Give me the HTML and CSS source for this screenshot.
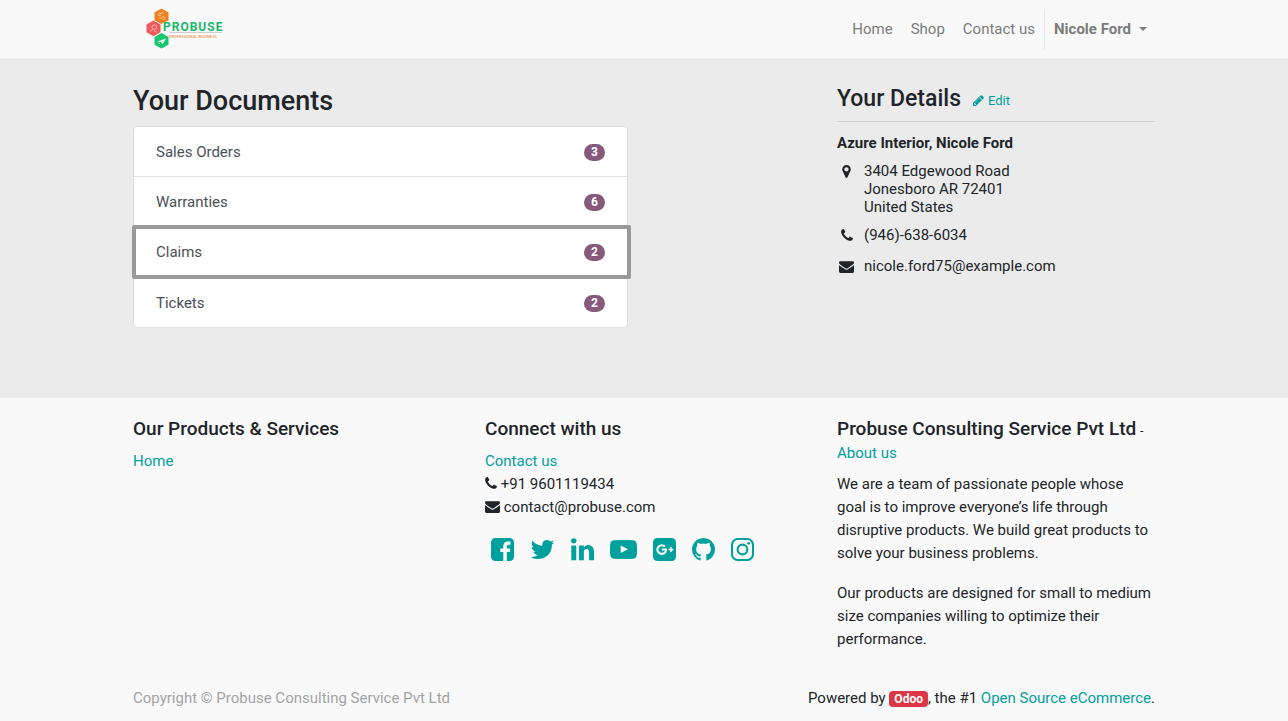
FILE: index.html
```html
<!DOCTYPE html>
<html lang="en">
<head>
<meta charset="utf-8">
<meta name="viewport" content="width=device-width, initial-scale=1">
<title>My Account | Probuse</title>
<link rel="stylesheet" href="styles.css">
</head>
<body>
<svg class="sprite" aria-hidden="true">
  <symbol id="phone" viewBox="192 0 1408 1792"><path d="M1600 1240q0 27-10 70.5t-21 68.5q-21 50-122 106-94 51-186 51-27 0-53-3.5t-57.5-12.5-47-14.5-55.5-20.5-49-18q-98-35-175-83-127-79-264-216t-216-264q-48-77-83-175-3-9-18-49t-20.5-55.5-14.5-47-12.5-57.5-3.5-53q0-92 51-186 56-101 106-122 25-11 68.5-21t70.5-10q14 0 21 3 18 6 53 76 11 19 30 54t35 63.5 31 53.5q3 4 17.5 25t21.5 35.5 7 28.5q0 20-28.5 50t-62 55-62 53-28.5 46q0 9 5 22.5t8.5 20.5 14 24 11.5 19q76 137 174 235t235 174q2 1 19 11.5t24 14 20.5 8.5 22.5 5q18 0 46-28.5t53-62 55-62 50-28.5q14 0 28.5 7t35.5 21.5 25 17.5q25 15 53.5 31t63.5 35 54 30q70 35 76 53 3 7 3 21z"/></symbol>
  <symbol id="envelope" viewBox="0 0 1792 1792"><path d="M1792 710v794q0 66-47 113t-113 47h-1472q-66 0-113-47t-47-113v-794q44 49 101 87 362 246 497 345 57 42 92.5 65.5t94.5 48 110 24.5h2q51 0 110-24.5t94.5-48 92.5-65.5q170-123 498-345 57-39 100-87zm0-294q0 79-49 151t-122 123q-376 261-468 325-10 7-42.5 31t-54 38.5-52 32.5-57.5 27-50 9h-2q-23 0-50-9t-57.5-27-52-32.5-54-38.5-42.5-31q-91-64-262-182.5t-205-142.5q-62-42-117-115.5t-55-136.5q0-78 41.5-130t118.5-52h1472q65 0 112.5 47t47.5 113z"/></symbol>
</svg>

<header class="site-header">
  <div class="container header-row">
    <a class="logo" href="#" aria-label="Probuse Professional Business">
      <svg width="90" height="42" viewBox="0 0 90 42">
        <path fill="#f07f1d" d="M28.500 0.500l7 3.900v7.800l-7 3.900-7-3.900V4.400z"/>
        <path fill="#ef5b5b" d="M20.500 12.600l7 3.900v7.800l-7 3.900-7-3.900v-7.800z"/>
        <path fill="#17c671" d="M28.500 25l7 3.900v7.800l-7 3.900-7-3.900v-7.800z"/>
        <g fill="none" stroke="#fff" stroke-opacity=".7" stroke-width=".7">
          <circle cx="26.700" cy="6.500" r="1.400"/><circle cx="30.300" cy="10" r="1.400"/><path d="M28 5h3M26 10h2"/>
          <circle cx="21.300" cy="19.200" r="2.300"/><path d="M19.600 21l-2.200 2.700M21 22.500l3 2"/>
        </g>
        <path fill="#fff" fill-opacity=".85" d="M24 33.500l9-3-3.500 6-1.500-2.500zM25 34.500l2 .5v1.500z"/>
        <path stroke="#c4c4c4" stroke-width=".8" d="M36 24.500h53"/>
        <text class="logo-name" x="30" y="23">PROBUSE</text>
        <text class="logo-tag" x="36" y="30">PROFESSIONAL BUSINESS</text>
      </svg>
    </a>
    <nav class="nav" aria-label="Main">
      <a href="#">Home</a>
      <a href="#">Shop</a>
      <a href="#">Contact us</a>
      <button class="user-menu" type="button" aria-haspopup="true">Nicole Ford<span class="caret"></span></button>
    </nav>
  </div>
</header>

<main class="account">
  <div class="container account-grid">
    <section class="documents">
      <h1>Your Documents</h1>
      <div class="doc-list">
        <a href="#">Sales Orders<span class="count">3</span></a>
        <a href="#">Warranties<span class="count">6</span></a>
        <a class="current" href="#">Claims<span class="count">2</span></a>
        <a href="#">Tickets<span class="count">2</span></a>
      </div>
    </section>
    <aside class="details">
      <div class="details-head">
        <h2>Your Details</h2>
        <a class="edit" href="#"><svg width="11" height="13" viewBox="128 0 1536 1792"><path d="M491 1536l91-91-235-235-91 91v107h128v128h107zm523-928q0-22-22-22-10 0-17 7l-542 542q-7 7-7 17 0 22 22 22 10 0 17-7l542-542q7-7 7-17zm-54-192l416 416-832 832h-416v-416zm683 96q0 53-37 90l-166 166-416-416 166-165q36-38 90-38 53 0 91 38l235 234q37 39 37 91z"/></svg>Edit</a>
      </div>
      <p class="details-name">Azure Interior, Nicole Ford</p>
      <address>
        <div class="line">
          <span class="line-icon"><svg width="9" height="15" viewBox="384 0 1024 1792"><path d="M1152 640q0-106-75-181t-181-75-181 75-75 181 75 181 181 75 181-75 75-181zm256 0q0 109-33 179l-364 774q-16 33-47.500 52t-67.500 19-67.500-19-46.500-52l-365-774q-33-70-33-179 0-212 150-362t362-150 362 150 150 362z"/></svg></span>
          <span>3404 Edgewood Road<br>Jonesboro AR 72401<br>United States</span>
        </div>
        <div class="line contact">
          <span class="line-icon"><svg width="12" height="15"><use href="#phone"/></svg></span>
          <span>(946)-638-6034</span>
        </div>
        <div class="line contact">
          <span class="line-icon"><svg width="15" height="15"><use href="#envelope"/></svg></span>
          <span>nicole.ford75@example.com</span>
        </div>
      </address>
    </aside>
  </div>
</main>

<footer class="site-footer">
  <div class="container footer-grid">
    <section>
      <h3>Our Products &amp; Services</h3>
      <ul>
        <li><a href="#">Home</a></li>
      </ul>
    </section>
    <section>
      <h3>Connect with us</h3>
      <ul>
        <li><a href="#">Contact us</a></li>
        <li><svg width="12" height="15"><use href="#phone"/></svg> +91 9601119434</li>
        <li><svg width="15" height="15"><use href="#envelope"/></svg> contact@probuse.com</li>
      </ul>
      <div class="social">
        <a href="#" aria-label="Facebook"><svg width="23" height="27" viewBox="128 0 1536 1792"><path d="M1376 128q119 0 203.500 84.500t84.500 203.500v960q0 119-84.500 203.500t-203.500 84.500h-188v-595h199l30-232h-229v-148q0-56 23.500-84t91.500-28l122-1v-207q-63-9-178-9-136 0-217.500 80t-81.500 226v171h-200v232h200v595h-532q-119 0-203.500-84.500t-84.500-203.500v-960q0-119 84.500-203.500t203.500-84.500h960z"/></svg></a>
        <a href="#" aria-label="Twitter"><svg width="25" height="27" viewBox="64 0 1664 1792"><path d="M1684 408q-67 98-162 167 1 14 1 42 0 130-38 259.500t-115.500 248.500-184.500 210.500-258 146-323 54.500q-271 0-496-145 35 4 78 4 225 0 401-138-105-2-188-64.500t-114-159.500q33 5 61 5 43 0 85-11-112-23-185.500-111.500t-73.500-205.500v-4q68 38 146 41-66-44-105-115t-39-154q0-88 44-163 121 149 294.500 238.500t371.500 99.500q-8-38-8-74 0-134 94.500-228.500t228.500-94.500q140 0 236 102 109-21 205-78-37 115-142 178 93-10 186-50z"/></svg></a>
        <a href="#" aria-label="LinkedIn"><svg width="23" height="27" viewBox="128 0 1536 1792"><path d="M477 625v991h-330v-991h330zm21-306q1 73-50.500 122t-135.500 49h-2q-82 0-132-49t-50-122q0-74 51.500-122.500t134.500-48.500 133 48.500 51 122.500zm1166 729v568h-329v-530q0-105-40.500-164.500t-126.500-59.500q-63 0-105.500 34.500t-63.500 85.500q-11 30-11 81v553h-329q2-399 2-647t-1-296l-1-48h329v144h-2q20-32 41-56t56.500-52 87-43.500 114.500-15.500q171 0 275 113.500t104 332.500z"/></svg></a>
        <a href="#" aria-label="YouTube"><svg width="27" height="27" viewBox="0 0 1792 1792"><path d="M711 1128l484-250-484-253v503zm185-862q168 0 324.500 4.500t229.500 9.500l73 4q1 0 17 1.500t23 3 23.500 4.500 28.500 8 28 13 31 19.500 29 26.500q6 6 15.500 18.500t29 58.500 26.500 101q8 64 12.500 136.500t5.500 113.500v176q1 145-18 290-7 55-25 99.500t-32 61.500l-14 17q-14 15-29 26.500t-31 19-28 12.500-28.500 8-24 4.500-23 3-16.500 1.500q-251 19-627 19-207-2-359.500-6.500t-200.500-7.500l-49-4-36-4q-36-5-54.500-10t-51-21-56.500-41q-6-6-15.500-18.500t-29-58.500-26.500-101q-8-64-12.500-136.500t-5.500-113.500v-176q-1-145 18-290 7-55 25-99.500t32-61.500l14-17q14-15 29-26.500t31-19.500 28-13 28.500-8 23.500-4.500 23-3 17-1.500q251-18 627-18z"/></svg></a>
        <a href="#" aria-label="Google Plus"><svg width="23" height="27" viewBox="128 0 1536 1792"><rect x="128" y="128" width="1536" height="1536" rx="288"/><g fill="none" stroke="#f9f9f9" stroke-width="140"><path d="M925 700a290 290 0 1 0 75 240v-42H715"/><path d="M1330 740v316M1172 898h316" stroke-width="118"/></g></svg></a>
        <a href="#" aria-label="GitHub"><svg width="23" height="27" viewBox="128 0 1536 1792"><path d="M896 128q209 0 385.500 103t279.500 279.500 103 385.500q0 251-146.500 451.500t-378.500 277.500q-27 5-40-7t-13-30q0-3 .5-76.500t.5-134.500q0-97-52-142 57-6 102.500-18t94-39 81-66.500 53-105 20.500-150.500q0-119-79-206 37-91-8-204-28-9-81 11t-92 44l-38 24q-93-26-192-26t-192 26q-16-11-42.500-27t-83.500-38.500-85-13.500q-45 113-8 204-79 87-79 206 0 85 20.500 150t52.500 105 80.500 67 94 39 102.500 18q-39 36-49 103-21 10-45 15t-57 5-65.500-21.500-55.500-62.500q-19-32-48.500-52t-49.500-24l-20-3q-21 0-29 4.500t-5 11.500 9 14 13 12l7 5q22 10 43.500 38t31.500 51l10 23q13 38 44 61.500t67 30 69.500 7 55.500-3.500l23-4q0 38 .5 88.500t.5 54.500q0 18-13 30t-40 7q-232-77-378.500-277.500t-146.500-451.500q0-209 103-385.500t279.500-279.500 385.500-103z"/></svg></a>
        <a href="#" aria-label="Instagram"><svg width="23" height="27" viewBox="128 0 1536 1792"><g fill="none" stroke="currentColor" stroke-width="138"><rect x="197" y="197" width="1398" height="1398" rx="370"/><circle cx="896" cy="896" r="325"/></g><circle cx="1306" cy="486" r="92"/></svg></a>
      </div>
    </section>
    <section>
      <div class="company"><h3>Probuse Consulting Service Pvt Ltd</h3> <small>-</small> <a href="#">About us</a></div>
      <p>We are a team of passionate people whose goal is to improve everyone’s life through disruptive products. We build great products to solve your business problems.</p>
      <p>Our products are designed for small to medium size companies willing to optimize their performance.</p>
    </section>
  </div>
  <div class="container legal">
    <span class="copyright">Copyright © Probuse Consulting Service Pvt Ltd</span>
    <span>Powered by <a class="odoo" href="#">Odoo</a>, the #1 <a href="#">Open Source eCommerce</a>.</span>
  </div>
</footer>
</body>
</html>
```

FILE: styles.css
```css
*, *::before, *::after { box-sizing: border-box; }

body {
  margin: 0;
  background: #f9f9f9;
  color: #212529;
  font: 400 15px/23px Roboto, "Liberation Sans", sans-serif;
}

h1, h2, h3, p, ul { margin: 0; padding: 0; font-weight: 500; }
p { font-weight: 400; }
ul { list-style: none; font-weight: 400; }
a { color: #00a09d; text-decoration: none; }
svg { fill: currentColor; }

.sprite { display: none; }

.container {
  max-width: 1054px;
  margin: 0 auto;
  padding: 0 16px;
}

/* Header */
.site-header { padding: 8px 0; border-bottom: 1px solid #f0f0f0; }
.header-row { display: flex; align-items: center; justify-content: space-between; }
.logo, .logo svg { display: block; }
.logo-name { font: 700 12px Roboto, sans-serif; letter-spacing: 1px; fill: #17b869; }
.logo-tag { font: 400 4px Roboto, sans-serif; fill: #f07f1d; }
.nav { display: flex; align-items: center; }
.nav a { padding: 9px; color: #7c7c7c; }
.user-menu {
  display: flex;
  align-items: center;
  gap: 8px;
  padding: 9px 8px 9px 9px;
  border: 0;
  border-left: 1px solid #e9e9e9;
  background: none;
  color: #7c7c7c;
  font: inherit;
  font-weight: 700;
}
.caret {
  border: 4px solid transparent;
  border-top-color: currentColor;
  border-bottom: 0;
}

/* Account overview */
.account { min-height: 339px; padding: 24px 0; background: #ebebeb; }
.account-grid {
  display: grid;
  grid-template-columns: minmax(0, 495fr) minmax(0, 209fr) minmax(0, 318fr);
}
.details { grid-column: 3; }
h1 { margin-bottom: 6px; font-size: 27px; line-height: 37px; }
.doc-list {
  border: 1px solid #dfdfdf;
  border-radius: 4px;
  background: #fff;
}
.doc-list a {
  position: relative;
  display: flex;
  align-items: center;
  justify-content: space-between;
  padding: 14px 22px 12px;
  color: #495057;
}
.doc-list a + a { border-top: 1px solid #dfdfdf; }
.doc-list .current { padding-bottom: 13px; }
.doc-list .current::after {
  content: "";
  position: absolute;
  inset: -2px -4px -2px -2px;
  z-index: 1;
  border: 4px solid #999;
  border-radius: 2px;
}
.count {
  padding: 0 7px;
  border-radius: 10px;
  background: #875a7b;
  color: #fff;
  font-size: 12px;
  font-weight: 700;
  line-height: 17px;
}
.details-head {
  display: flex;
  align-items: center;
  gap: 12px;
  padding-bottom: 6px;
  border-bottom: 1px solid #d0d1d1;
}
h2 { font-size: 23px; line-height: 32px; }
.edit { padding-top: 3px; font-size: 13px; }
.edit svg { margin-right: 4px; vertical-align: -2px; }
.details-name { padding: 10px 0 7px; font-weight: 700; }
address { font-style: normal; line-height: 18px; }
.line { display: flex; gap: 8px; margin-bottom: 8px; }
.line-icon { width: 19px; text-align: center; }
.line-icon svg { vertical-align: -3px; }
.contact { line-height: 23px; }

/* Footer */
.site-footer { padding: 19px 0 12px; }
.footer-grid {
  display: grid;
  grid-template-columns: repeat(3, 1fr);
  gap: 34px;
}
h3 { margin-bottom: 10px; font-size: 19px; }
.footer-grid li svg { vertical-align: -2px; }
.social { display: flex; gap: 16px; padding: 17px 6px; }
.social svg { display: block; }
.company { margin-bottom: 8px; }
.company h3 { display: inline; }
.footer-grid p { margin-bottom: 17px; }
.legal { display: flex; justify-content: space-between; margin-top: 19px; }
.copyright { color: #a3a4a5; }
.odoo {
  padding: 1px 5px;
  border-radius: 4px;
  background: #dc3545;
  color: #fff;
  font-size: 12px;
  font-weight: 700;
}
```
